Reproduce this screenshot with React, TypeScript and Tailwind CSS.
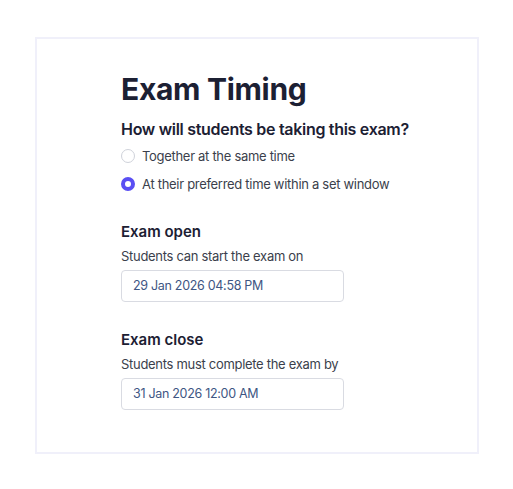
import React, { useState } from 'react';

// ── Radio options ─────────────────────────────────────────────────────────────
const OPTIONS = [
  { id: 'same',   label: 'Together at the same time' },
  { id: 'window', label: 'At their preferred time within a set window' },
] as const;

function Radio({ checked }: { checked: boolean }) {
  return checked ? (
    <span className="size-[14px] rounded-full border-[4px] border-[#5a4ff3] bg-white shrink-0" />
  ) : (
    <span className="size-[14px] rounded-full border border-[#cfd2da] bg-white shrink-0" />
  );
}

function DateField({ title, hint, value }: { title: string; hint: string; value: string }) {
  return (
    <div className="flex flex-col">
      <h3 className="text-[15px] leading-[20px] font-semibold text-[#1c2033]">{title}</h3>
      <p className="mt-[4px] text-[13px] leading-[20px] tracking-[-0.3px] text-[#3b3f4c]">{hint}</p>
      <div className="mt-[4px] w-[223px] h-[32px] flex items-center px-[11px] rounded-[4px] border border-[#d9dbe2] text-[12.5px] tracking-[-0.3px] text-[#3e5683]">
        {value}
      </div>
    </div>
  );
}

export default function App() {
  const [mode, setMode] = useState<'same' | 'window'>('window');

  return (
    <div className="w-[513px] h-[489px] bg-white pt-[37px] pl-[35px]" style={{ fontFamily: 'Inter, "Noto Sans", sans-serif' }}>
      <div className="w-[444px] h-[417px] border-2 border-[#f0f0fa] pl-[84px] pt-[30px]">
        <h1 className="text-[30px] leading-[40px] font-bold text-[#1c2033] tracking-[-0.3px]">Exam Timing</h1>
        <h2 className="mt-[8px] text-[16px] leading-[24px] font-semibold tracking-[-0.3px] text-[#1c2033]">
          How will students be taking this exam?
        </h2>

        <div className="mt-[5px] flex flex-col gap-[8px]">
          {OPTIONS.map(({ id, label }) => (
            <label key={id} className="flex items-center gap-[7px] h-[20px] cursor-pointer" onClick={() => setMode(id)}>
              <Radio checked={mode === id} />
              <span className="text-[13px] leading-[20px] tracking-[-0.3px] text-[#3b3f4c]">{label}</span>
            </label>
          ))}
        </div>

        <div className="mt-[28px] flex flex-col gap-[28px]">
          <DateField title="Exam open" hint="Students can start the exam on" value="29 Jan 2026 04:58 PM" />
          <DateField title="Exam close" hint="Students must complete the exam by" value="31 Jan 2026 12:00 AM" />
        </div>
      </div>
    </div>
  );
}
